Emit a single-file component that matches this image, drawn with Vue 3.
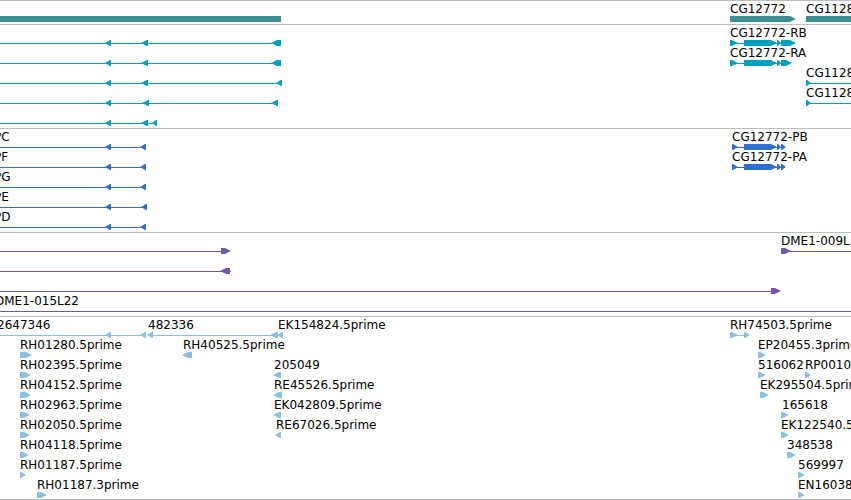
<script setup>
// Feature parts: [kind, start, end]
// line = intron, bar = solid block, right / left = exon with an arrow head
const far = 4000

const ra = (end) => [
  ['line', 730, 781],
  ['right', 730, 738],
  ['right', 744, 777],
  ['right', 777, 781],
  ['right', 781, end],
]
const pb = [
  ['line', 732, 781],
  ['right', 732, 738],
  ['right', 744, 777],
  ['right', 777, 781],
  ['right', 781, 786],
]
const left = (...spans) => [
  ['line', 0, spans[spans.length - 1][0] + 1],
  ...spans.map(([a, b]) => ['left', a, b]),
]

const tracks = [
  {
    name: 'genes',
    rows: [
      {
        labels: [[730, 'CG12772'], [806, 'CG1128']],
        parts: [['bar', 0, 281], ['right', 730, 796], ['bar', 806, far]],
      },
    ],
  },
  {
    name: 'transcripts',
    rows: [
      { labels: [[730, 'CG12772-RB']], parts: [...left([105, 111], [141, 148], [271, 281]), ...ra(796)] },
      { labels: [[730, 'CG12772-RA']], parts: [...left([105, 111], [141, 148], [271, 281]), ...ra(792)] },
      { labels: [[806, 'CG1128']], parts: [...left([105, 111], [141, 148], [276, 282]), ['line', 806, far], ['right', 806, 811]] },
      { labels: [[806, 'CG1128']], parts: [...left([105, 111], [142, 149], [271, 278]), ['line', 806, far], ['right', 806, 811]] },
      { labels: [], parts: left([105, 111], [141, 148], [152, 157]) },
    ],
  },
  {
    name: 'proteins',
    rows: [
      { labels: [[-6, 'PC'], [732, 'CG12772-PB']], parts: [...left([105, 111], [140, 146]), ...pb] },
      { labels: [[-6, 'PF'], [732, 'CG12772-PA']], parts: [...left([105, 111], [140, 146]), ...pb] },
      { labels: [[-6, 'PG']], parts: left([105, 111], [140, 146]) },
      { labels: [[-6, 'PE']], parts: left([105, 111], [141, 147]) },
      { labels: [[-6, 'PD']], parts: left([105, 111], [140, 146]) },
    ],
  },
  {
    name: 'clones',
    rows: [
      { labels: [[781, 'DME1-009L']], parts: [['line', 0, 221], ['right', 221, 231], ['line', 781, far], ['right', 781, 791]] },
      { labels: [], parts: [['line', 0, 231], ['left', 220, 230]] },
      { labels: [], parts: [['line', 0, 771], ['right', 771, 781]] },
      { labels: [[-5, 'DME1-015L22']], parts: [['line', 0, far]] },
    ],
  },
  {
    name: 'ests',
    rows: [
      {
        labels: [[-3, '2647346'], [148, '482336'], [278, 'EK154824.5prime'], [730, 'RH74503.5prime']],
        parts: [
          ['line', 0, 142], ['left', 105, 111], ['left', 140, 146],
          ['line', 149, 272], ['left', 147, 153], ['left', 270, 278], ['left', 277, 283],
          ['line', 730, 745], ['right', 730, 738], ['right', 744, 750],
        ],
      },
      {
        labels: [[20, 'RH01280.5prime'], [183, 'RH40525.5prime'], [758, 'EP20455.3prime']],
        parts: [['right', 20, 32], ['left', 182, 192], ['right', 758, 766]],
      },
      {
        labels: [[20, 'RH02395.5prime'], [274, '205049'], [758, '516062'], [805, 'RP0010']],
        parts: [['right', 20, 31], ['left', 273, 281], ['right', 758, 766], ['right', 805, 811]],
      },
      {
        labels: [[20, 'RH04152.5prime'], [274, 'RE45526.5prime'], [760, 'EK295504.5prime']],
        parts: [['right', 20, 31], ['left', 273, 282], ['right', 760, 769]],
      },
      {
        labels: [[20, 'RH02963.5prime'], [274, 'EK042809.5prime'], [782, '165618']],
        parts: [['right', 20, 30], ['left', 273, 281], ['right', 781, 789]],
      },
      {
        labels: [[20, 'RH02050.5prime'], [276, 'RE67026.5prime'], [781, 'EK122540.5prime']],
        parts: [['right', 20, 30], ['left', 275, 281], ['right', 781, 789]],
      },
      {
        labels: [[20, 'RH04118.5prime'], [787, '348538']],
        parts: [['right', 20, 29], ['right', 787, 796]],
      },
      {
        labels: [[20, 'RH01187.5prime'], [798, '569997']],
        parts: [['right', 20, 26], ['right', 798, 805]],
      },
      {
        labels: [[37, 'RH01187.3prime'], [798, 'EN16038']],
        parts: [['right', 37, 47], ['right', 798, 805]],
      },
    ],
  },
]

function shape([kind, a, b]) {
  if (kind === 'line') return `M${a} 3H${b}V4H${a}Z`
  if (kind === 'bar') return `M${a} 0H${b}V6H${a}Z`
  const head = Math.min(6, b - a - 1)
  if (kind === 'right') {
    const n = b - head
    return `M${a} 0H${n}L${b} 3L${n} 6H${a}Z`
  }
  const n = a + head
  return `M${b} 0H${n}L${a} 3L${n} 6H${b}Z`
}
</script>

<template>
  <main class="browser">
    <section v-for="track in tracks" :key="track.name" class="track" :class="track.name">
      <div v-for="(row, i) in track.rows" :key="i" class="row">
        <div class="labels">
          <span v-for="[x, text] in row.labels" :key="x" class="label" :style="{ left: x + 'px' }">{{ text }}</span>
        </div>
        <svg class="glyphs" aria-hidden="true">
          <path v-for="(part, j) in row.parts" :key="j" :d="shape(part)" />
        </svg>
      </div>
    </section>
  </main>
</template>

<style>
body {
  margin: 0;
  background: #fff;
}
</style>

<style scoped>
.browser {
  overflow: hidden;
  border-bottom: 1px solid #bebebe;
  font: 12px/12px "DejaVu Sans", sans-serif;
  color: #000;
}
.track {
  padding: 2px 0 1px;
  border-top: 1px solid #bebebe;
}
.row {
  display: flex;
  flex-direction: column;
  padding-bottom: 1px;
}
.labels {
  position: relative;
  height: 13px;
}
.label {
  position: absolute;
  top: 0;
  white-space: nowrap;
}
.glyphs {
  display: block;
  width: 100%;
  height: 6px;
  overflow: hidden;
  fill: currentColor;
}
.genes .glyphs { color: #3d8e92; }
.transcripts .glyphs { color: #009ebf; }
.proteins .glyphs { color: #2f6dcf; }
.clones .glyphs { color: #7357a8; }
.ests .glyphs { color: #89bfdf; }
.ests { padding-bottom: 0; }
</style>
